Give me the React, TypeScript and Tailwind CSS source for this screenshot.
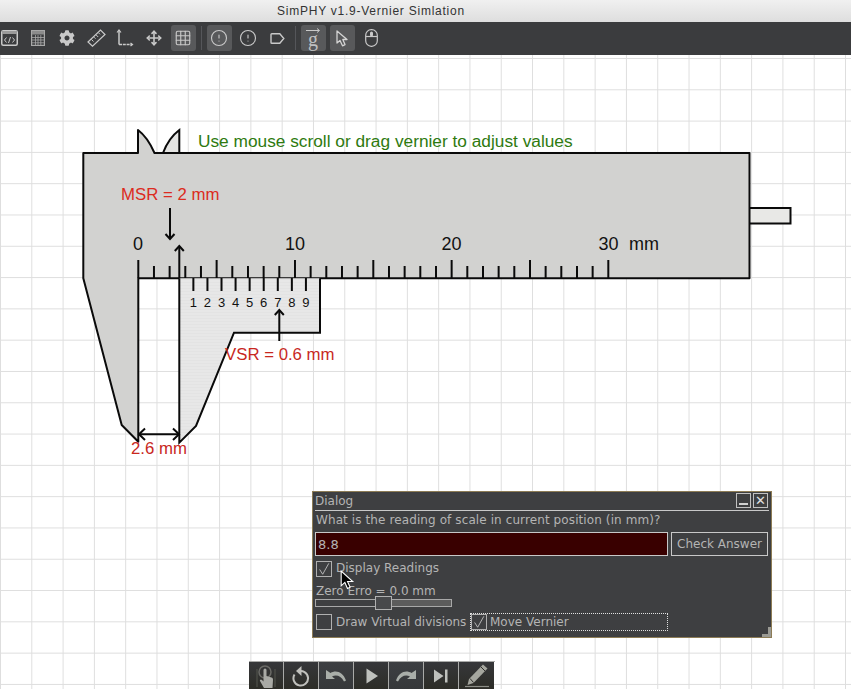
import { Grid3x3, Move, CircleAlert } from 'lucide-react';
import { FaCog } from 'react-icons/fa';
import type { ReactNode } from 'react';

const ICON = '#c9c9c9';

function ToolButton({ active, children }: { active?: boolean; children: ReactNode }) {
  return (
    <div className={`mx-[2px] flex h-[26px] w-[25px] flex-none items-center justify-center rounded-[3px] ${active ? 'bg-[#58595b]' : ''}`}>
      {children}
    </div>
  );
}

function Divider() {
  return <div className="ml-[3px] mr-[3px] h-[24px] w-px flex-none bg-[#55565a]" />;
}

function CodeWindowIcon() {
  return (
    <svg width="17" height="16" viewBox="0 0 17 16" fill="none" stroke={ICON}>
      <rect x="0.750" y="0.750" width="15.500" height="14.500" rx="1.500" strokeWidth="1.500" />
      <rect x="1" y="1" width="15" height="3" fill="#9a9a9a" stroke="none" />
      <path d="M5.500 7.500 3.500 10l2 2.500M11.500 7.500l2 2.500-2 2.500M9.500 7l-2 6" strokeWidth="1" />
    </svg>
  );
}

function SheetIcon() {
  return (
    <svg width="14" height="16" viewBox="0 0 14 16" fill="none" stroke="#a8a8a8">
      <rect x="0.600" y="0.600" width="12.800" height="14.800" strokeWidth="1.200" />
      <rect x="1" y="1" width="12" height="3.500" fill="#8c8c8c" stroke="none" />
      <path d="M1 7.500h12M1 10h12M1 12.800h12M4.500 5v10M7 5v10M9.800 5v10" strokeWidth="0.800" />
    </svg>
  );
}

function RulerIcon() {
  return (
    <svg width="19" height="18" viewBox="0 0 19 18" fill="none" stroke={ICON}>
      <path d="M1 13 13.500 1 18 5.500 5.500 17.200Z" strokeWidth="1.200" />
      <path d="M4.500 10.500l2 2M7 8.200l1.500 1.500M9.200 6l2 2M11.500 3.800l1.500 1.500" strokeWidth="1" />
    </svg>
  );
}

function AxesIcon() {
  return (
    <svg width="18" height="18" viewBox="0 0 18 18" fill="none" stroke={ICON}>
      <path d="M3 1v14.500" strokeWidth="1.500" />
      <path d="M3 15.500H16" strokeWidth="1.500" strokeDasharray="3 0.800" />
      <path d="M1 3.500 3 1l2 2.500M14.500 14l2 1.500-2 1.500" strokeWidth="1.200" />
    </svg>
  );
}

function TagIcon() {
  return (
    <svg width="15" height="11" viewBox="0 0 15 11" fill="none" stroke={ICON} strokeWidth="1.400">
      <path d="M1 1.500a.8.8 0 0 1 .8-.8h8l4 4.800-4 4.800h-8a.8.8 0 0 1-.8-.8Z" />
    </svg>
  );
}

function VectorG() {
  return (
    <div className="relative flex h-full w-full items-center justify-center">
      <svg className="absolute left-[5px] top-[3px]" width="15" height="5" viewBox="0 0 15 5" fill="none" stroke={ICON}>
        <path d="M0 2.500h13M11 .5l2.500 2-2.500 2" strokeWidth="1" />
      </svg>
      <span className="mt-[2px] font-['Liberation_Serif',serif] text-[20px] leading-none text-[#c0c0c0]">g</span>
    </div>
  );
}

function PointerIcon() {
  return (
    <svg width="12" height="17" viewBox="0 0 12 17" fill="none" stroke="#d4d4d4" strokeWidth="1.300" strokeLinejoin="round">
      <path d="M1 1V13L4 10.500 6.500 15.800 9 14.600 6.800 9.500H11Z" />
    </svg>
  );
}

function MouseIcon() {
  return (
    <svg width="13" height="18" viewBox="0 0 13 18" fill="none" stroke={ICON} strokeWidth="1.200">
      <rect x="0.700" y="0.700" width="11.600" height="16.600" rx="5.500" />
      <path d="M1 7.500h11" />
      <rect x="5" y="2.500" width="3" height="5" rx="1.500" fill={ICON} stroke="none" />
    </svg>
  );
}

function Check() {
  return (
    <svg width="16" height="16" viewBox="0 0 16 16" fill="none" stroke="#c4c4c4" strokeWidth="1">
      <path d="M3 8.500 6.500 14 13.500 1.500" />
    </svg>
  );
}

function CheckBox({ checked }: { checked?: boolean }) {
  return (
    <div className="box-border flex h-[16px] w-[16px] flex-none items-center justify-center border border-[#b0b0b0]">
      {checked && <Check />}
    </div>
  );
}

function Dialog() {
  return (
    <div className="absolute left-[312px] top-[436px] box-border flex h-[147px] w-[460px] flex-col border border-[#8d7c55] bg-[#3e3f41] px-[2px] font-['DejaVu_Sans',sans-serif] text-[12px] leading-none text-[#b4b4b4]">
      <div className="flex h-[19px] flex-none items-center justify-between border-b border-[#c8c8c8] pb-[1px] pr-[1px]">
        <span>Dialog</span>
        <div className="flex gap-[2px]">
          <div className="box-border flex h-[15px] w-[15px] items-end justify-center border border-[#c0c0c0] pb-[2px]">
            <div className="h-[2px] w-[9px] bg-[#d0d0d0]" />
          </div>
          <div className="box-border flex h-[15px] w-[15px] items-center justify-center border border-[#c0c0c0] text-[13px] font-bold text-[#e0e0e0]">
            ✕
          </div>
        </div>
      </div>
      <div className="flex h-[21px] flex-none items-center pb-[3px] pl-[1px] tracking-[0.1px]">What is the reading of scale in current position (in mm)?</div>
      <div className="flex h-[24px] flex-none gap-[3px]">
        <div className="box-border flex w-[353px] items-center border border-[#c8c8c8] bg-[#390000] pl-[2px] text-[13px]">8.8</div>
        <div className="box-border flex w-[97px] items-center justify-center border border-[#c8c8c8] bg-[#3e3f41]">Check Answer</div>
      </div>
      <div className="mt-[5px] flex h-[16px] flex-none items-center gap-[4px] pl-[1px]">
        <CheckBox checked />
        <span className="-mt-[3px]">Display Readings</span>
      </div>
      <div className="mt-[7px] flex h-[14px] flex-none items-center pl-[1px]">Zero Erro = 0.0 mm</div>
      <div className="relative mt-[1px] flex h-[8px] w-[137px] flex-none border border-[#a8a8a8]">
        <div className="w-[60px]" />
        <div className="flex-1 bg-[#5c5c5c]" />
        <div className="absolute left-[59px] top-[-4px] box-border h-[14px] w-[17px] border border-[#b0b0b0] bg-[#48494b]" />
      </div>
      <div className="mt-[6px] flex h-[18px] flex-none items-center pl-[1px]">
        <CheckBox />
        <span className="ml-[4px] w-[134px] flex-none">Draw Virtual divisions</span>
        <div className="box-border flex h-[18px] w-[198px] flex-none items-center gap-[3px] border border-dotted border-[#e0e0e0]">
          <CheckBox checked />
          <span>Move Vernier</span>
        </div>
      </div>
      <div className="absolute bottom-0 right-0 h-[10px] w-[9px] border-b-[3px] border-r-[3px] border-[#9a9a94]" />
    </div>
  );
}

function BottomButton({ children, lit }: { children: ReactNode; lit?: boolean }) {
  return (
    <div className={`flex h-full w-[35px] flex-none items-center justify-center border-r border-[#a9aaa8] last:border-r-0 ${lit ? 'bg-linear-to-b from-[#3d3f42] to-[#36383a]' : 'bg-linear-to-b from-[#36373a] to-[#2d2d27]'}`}>
      {children}
    </div>
  );
}

function BottomBar() {
  return (
    <div className="absolute bottom-0 left-[249px] flex h-[28px] w-[246px] border-t border-[#a9aaa8]">
      <BottomButton>
        <svg width="24" height="24" viewBox="0 0 24 24" fill="none">
          <path d="M3 5v18M21 5v18" stroke="#55564f" />
          <circle cx="11" cy="8" r="6" stroke="#6a6a66" strokeWidth="1.500" />
          <path d="M9.500 6a1.500 1.500 0 0 1 3 0v6l5 1.500c1 .4 1.500 1 1.500 2.500l-.5 8H10l-4-7c-.6-1.200 1-2.200 2-1l1.500 1.500Z" fill="#a9aaa5" />
        </svg>
      </BottomButton>
      <BottomButton>
        <svg width="18" height="22" viewBox="0 0 18 22" fill="none">
          <path d="M6 6.500a7.300 7.300 0 1 1-3.500 3" stroke="#c0c0bc" strokeWidth="2" />
          <path d="M9.500 1v10L4 6Z" fill="#c0c0bc" />
        </svg>
      </BottomButton>
      <BottomButton lit>
        <svg width="22" height="14" viewBox="0 0 22 14" fill="none">
          <path d="M1 1v9h9L7 7.500c4-2 9-1 12 5l2-1C18 3 11 .5 5.500 4Z" fill="#a9aea9" />
        </svg>
      </BottomButton>
      <BottomButton>
        <svg className="ml-[2px]" width="12" height="16" viewBox="0 0 12 16">
          <path d="M0.500 0.500 12 8 0.500 15.500Z" fill="#bfc1bd" />
        </svg>
      </BottomButton>
      <BottomButton lit>
        <svg width="22" height="14" viewBox="0 0 22 14" fill="none">
          <path d="M21 1v9h-9l3-2.500c-4-2-9-1-12 5l-2-1C4 3 11 .5 16.500 4Z" fill="#a9aea9" />
        </svg>
      </BottomButton>
      <BottomButton>
        <svg width="14" height="14" viewBox="0 0 14 14" fill="#bfc1bd">
          <path d="M0 0.500 9.500 7 0 13.500Z" />
          <rect x="11" y="0.500" width="2.500" height="13" />
        </svg>
      </BottomButton>
      <BottomButton>
        <svg width="26" height="25" viewBox="0 0 26 25" fill="none">
          <path d="M19 1.500 23.500 5.500 9.500 20 3.500 22l1.500-6Z" fill="#a5a69e" />
          <path d="M17 4l4 4M6 15.500l3.500 4" stroke="#2f2f2a" />
          <path d="M1 23.500h24" stroke="#8d8e87" strokeWidth="1.200" />
        </svg>
      </BottomButton>
    </div>
  );
}

const mainTicks = Array.from({ length: 31 }, (_, i) => i);
const vernierTicks = [1, 2, 3, 4, 5, 6, 7, 8, 9];

function arrowHead(x: number, y: number, dir: 1 | -1) {
  return `M${x - 4.5} ${y - 5 * dir}L${x} ${y}L${x + 4.5} ${y - 5 * dir}`;
}

function Caliper() {
  const stroke = { stroke: '#0a0a0a', strokeWidth: 2, fill: 'none' };
  return (
    <svg className="absolute inset-0 h-full w-full" viewBox="0 55 851 634">
      <defs>
        <pattern id="vernierFill" width="4" height="3" patternUnits="userSpaceOnUse">
          <rect width="4" height="3" fill="#e7e7e7" />
          <rect width="4" height="1" fill="#e3e3e3" />
        </pattern>
      </defs>
      {/* depth rod */}
      <rect x="749" y="208" width="41.500" height="15.500" {...stroke} style={{ fill: '#e8e8e6' }} />
      {/* upper jaws */}
      <path d="M179.300 130C170 137 166 145 163 153H179.300Z" fill="#e4e4e2" />
      <path d="M179.300 153V130C170 137 166 145 163 153" {...stroke} />
      {/* main beam with fixed jaw */}
      <path
        d="M83.300 153H138V130C146 136 151 145 154.500 153H749.500V278.300H138.300V441.700L121.700 425L83.300 278.300Z"
        fill="#d2d2d0"
        stroke="#0a0a0a"
        strokeWidth="2"
        strokeLinejoin="round"
      />
      {/* vernier */}
      <path d="M179.300 278.300H320V332.700H234L196 426L179.300 442.700Z" fill="url(#vernierFill)" />
      <path d="M320 278.300V332.700H234L196 426L179.300 442.700V278.300" {...stroke} />
      {mainTicks.map((i) => (
        <path key={i} d={`M${138.3 + i * 15.667} 278V${i % 5 === 0 ? 260 : 266}`} {...stroke} />
      ))}
      {vernierTicks.map((i) => (
        <path key={i} d={`M${179.3 + i * 14.07} 278V291`} {...stroke} />
      ))}
      <g fontFamily="'Liberation Sans', Arial, sans-serif">
        {vernierTicks.map((i) => (
          <text key={i} x={179.3 + i * 14.07} y="307" fontSize="13" textAnchor="middle" fill="#111">
            {i}
          </text>
        ))}
        <g fontSize="18" fill="#111" textAnchor="middle">
          <text x="138" y="250">0</text>
          <text x="295" y="250">10</text>
          <text x="451.500" y="250">20</text>
          <text x="608.500" y="250">30</text>
        </g>
        <text x="629" y="250" fontSize="18" fill="#111">mm</text>
        <text x="198" y="147" fontSize="17.300" fill="#2e7a10">Use mouse scroll or drag vernier to adjust values</text>
        <text x="121" y="200" fontSize="16.800" fill="#dc2b20">MSR = 2 mm</text>
        <text x="225" y="360" fontSize="16.800" fill="#c8281e">VSR = 0.6 mm</text>
        <text x="131" y="454" fontSize="16.800" fill="#c8281e">2.6 mm</text>
      </g>
      {/* reading arrows */}
      <path d="M170 208V239" {...stroke} />
      <path d={arrowHead(170, 239, 1)} {...stroke} />
      <path d="M179.300 278V246" {...stroke} />
      <path d={arrowHead(179.3, 246, -1)} {...stroke} />
      <path d="M279.300 341V310" {...stroke} />
      <path d={arrowHead(279.3, 310, -1)} {...stroke} />
      <path d="M139 434.300H179" {...stroke} />
      <path d="M145 428.500 139 434.300 145 440M173 428.500 179 434.300 173 440" {...stroke} />
    </svg>
  );
}

export default function App() {
  return (
    <div className="flex h-[689px] w-[851px] flex-col overflow-hidden bg-white">
      <div className="flex h-[22px] flex-none items-center bg-linear-to-b from-[#f0f0f0] to-[#dedede] pl-[277px] font-['Liberation_Sans',sans-serif] text-[12px] tracking-[0.760px] text-[#333]">
        SimPHY v1.9-Vernier Simlation
      </div>
      <div className="-ml-[5.500px] flex h-[33px] flex-none items-center bg-[#3b3c3e] pb-[1px]">
        <ToolButton><CodeWindowIcon /></ToolButton>
        <ToolButton><SheetIcon /></ToolButton>
        <ToolButton><FaCog size={16} color={ICON} /></ToolButton>
        <ToolButton><RulerIcon /></ToolButton>
        <ToolButton><AxesIcon /></ToolButton>
        <ToolButton><Move size={16} color={ICON} strokeWidth={2.400} /></ToolButton>
        <ToolButton active><Grid3x3 size={18} color={ICON} strokeWidth={1.500} /></ToolButton>
        <Divider />
        <ToolButton active><CircleAlert size={18} color={ICON} strokeWidth={1.500} /></ToolButton>
        <ToolButton><CircleAlert size={18} color={ICON} strokeWidth={1.500} /></ToolButton>
        <ToolButton><TagIcon /></ToolButton>
        <Divider />
        <ToolButton active><VectorG /></ToolButton>
        <ToolButton active><PointerIcon /></ToolButton>
        <ToolButton><MouseIcon /></ToolButton>
      </div>
      <div className="relative flex-1 bg-white bg-[linear-gradient(to_right,#dedede_1px,transparent_1px),linear-gradient(to_bottom,#dedede_1px,transparent_1px)] bg-size-[31.300px_31.300px] bg-position-[0px_3px]">
        <Caliper />
        <Dialog />
        <BottomBar />
        <svg className="absolute left-[340px] top-[515px]" width="15" height="20" viewBox="0 0 14 19">
          <path d="M1 1V15L4.500 11.800 7 17.500 9.500 16.300 7 11H12Z" fill="#000" stroke="#fff" strokeWidth="1" />
        </svg>
      </div>
    </div>
  );
}
